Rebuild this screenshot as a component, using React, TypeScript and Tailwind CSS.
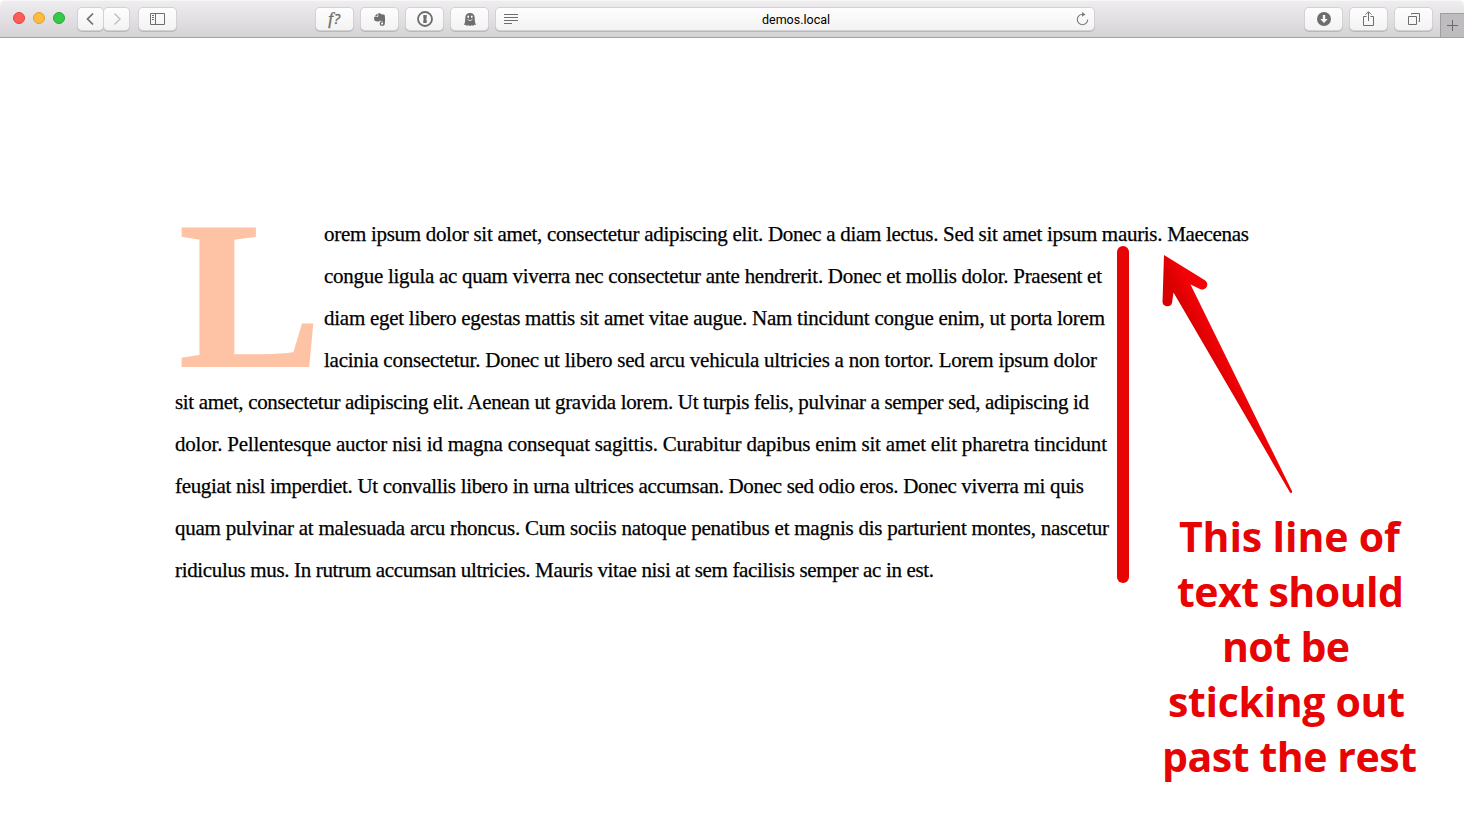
import { useLayoutEffect, useRef } from "react";
import type { ReactNode } from "react";

type Line = { text: string; width: number; shift?: string };

const besideCap: Line[] = [
  { text: "orem ipsum dolor sit amet, consectetur adipiscing elit. Donec a diam lectus. Sed sit amet ipsum mauris. Maecenas", width: 925 },
  { text: "congue ligula ac quam viverra nec consectetur ante hendrerit. Donec et mollis dolor. Praesent et", width: 778 },
  { text: "diam eget libero egestas mattis sit amet vitae augue. Nam tincidunt congue enim, ut porta lorem", width: 781 },
  { text: "lacinia consectetur. Donec ut libero sed arcu vehicula ultricies a non tortor. Lorem ipsum dolor", width: 773 },
];

const belowCap: Line[] = [
  { text: "sit amet, consectetur adipiscing elit. Aenean ut gravida lorem. Ut turpis felis, pulvinar a semper sed, adipiscing id", width: 914 },
  { text: "dolor. Pellentesque auctor nisi id magna consequat sagittis. Curabitur dapibus enim sit amet elit pharetra tincidunt", width: 932 },
  { text: "feugiat nisl imperdiet. Ut convallis libero in urna ultrices accumsan. Donec sed odio eros. Donec viverra mi quis", width: 909 },
  { text: "quam pulvinar at malesuada arcu rhoncus. Cum sociis natoque penatibus et magnis dis parturient montes, nascetur", width: 934 },
  { text: "ridiculus mus. In rutrum accumsan ultricies. Mauris vitae nisi at sem facilisis semper ac in est.", width: 759 },
];

const note: Line[] = [
  { text: "This line of", width: 221, shift: "pl-[26px]" },
  { text: "text should", width: 227, shift: "pl-[24px]" },
  { text: "not be", width: 128, shift: "pl-[69px]" },
  { text: "sticking out", width: 237, shift: "pl-[15px]" },
  { text: "past the rest", width: 255, shift: "pl-[9px]" },
];

/** One line of text, tracked so that it runs to the given measure. */
function FitLine({ text, width, shift = "" }: Line) {
  const ref = useRef<HTMLSpanElement>(null);
  useLayoutEffect(() => {
    const el = ref.current;
    if (!el) return;
    el.style.letterSpacing = "0px";
    const natural = el.getBoundingClientRect().width;
    el.style.letterSpacing = `${(width - natural) / (text.length - 1)}px`;
  }, [text, width]);
  return (
    <div className={`whitespace-nowrap ${shift}`}>
      <span ref={ref}>{text}</span>
    </div>
  );
}

function ToolButton({ children, className = "w-[38px]" }: { children?: ReactNode; className?: string }) {
  return (
    <div
      className={`flex h-[22px] shrink-0 items-center justify-center rounded-[4px] bg-linear-to-b from-[#fefefe] to-[#f3f3f3] text-[#6e6e6e] shadow-[0_0_0_1px_#d3d1d3,0_1px_0_1px_#b9b7b9] ${className}`}
    >
      {children}
    </div>
  );
}

function Toolbar() {
  return (
    <header className="flex h-[38px] items-start rounded-t-[5px] border-b border-[#a3a1a3] bg-linear-to-b from-[#efedef] to-[#d5d3d5] pt-2 shadow-[inset_0_1px_0_#f8f7f8]">
      <div className="ml-[13px] mt-1 flex gap-2">
        <i className="size-3 rounded-full border border-[#e2443f] bg-[#fc5b57]" />
        <i className="size-3 rounded-full border border-[#e0a033] bg-[#fdbc40]" />
        <i className="size-3 rounded-full border border-[#27a833] bg-[#35c94a]" />
      </div>
      <ToolButton className="ml-[13px] w-[25px] pr-[2px]">
        <svg width="10" height="14" viewBox="0 0 10 14" fill="none" stroke="#6e6e6e" strokeWidth="1.7"><path d="M8 1.500 2.500 7 8 12.500" /></svg>
      </ToolButton>
      <ToolButton className="ml-px w-[25px]">
        <svg width="10" height="14" viewBox="0 0 10 14" fill="none" stroke="#c2c2c2" strokeWidth="1.5"><path d="M2.5 1.5 8 7l-5.5 5.5" /></svg>
      </ToolButton>
      <ToolButton className="ml-[10px] w-[37px]">
        <svg width="15" height="12" viewBox="0 0 15 12" fill="none" stroke="#6e6e6e"><path d="M.5.5h14v11H.5zM5.5.5v11M2 2.5h2M2 4.5h2M2 6.5h2" /></svg>
      </ToolButton>
      <ToolButton className="ml-[140px] w-[37px]">
        <span className="pb-[2px] font-['Liberation_Serif',serif] text-[17px] italic leading-none tracking-[1px] [-webkit-text-stroke:0.4px_#6e6e6e]">f<span className="font-['Open_Sans',sans-serif] text-[14px]">?</span></span>
      </ToolButton>
      <ToolButton className="ml-2 w-[37px]">
        <svg width="12" height="13" viewBox="0 0 12 13" fill="currentColor"><path d="M3.6.3v2.3c0 .6-.3.8-.9.8H.5L3.6.3Z" /><path d="M4.3.2h1.5c.7 0 1.100.5 1.300 1l2.600.4c.9.1 1.100.8 1.200 2 .3 3 .2 5.700-.2 7.700-.2 1-1 1.500-2 1.500H7.500C6.300 12.800 5.800 12 5.800 11V10c0-1 .7-1.700 1.700-1.700h.9v1.500h-.8c-.4 0-.5.2-.5.5v.7c0 .4.2.6.6.6h.7c.5 0 .7-.3.7-.8 0-1.700-.3-2.500-1.300-2.700l-1.200-.2-.5-.8c-.1.900-.5 1.300-1.300 1.300-1.700 0-3.500-.2-4-.7C.1 7 0 5.400.2 4h2.900c.8 0 1.200-.4 1.200-1.200V.2Z" /></svg>
      </ToolButton>
      <ToolButton className="ml-2 w-[37px]">
        <svg width="16" height="16" viewBox="0 0 16 16"><circle cx="8" cy="8" r="7" fill="none" stroke="currentColor" strokeWidth="1.8" /><path d="M6.300 4h3.400v3.300l-.7.8.7.8V12H6.300V8.700L7 8l-.7-.7Z" fill="currentColor" /></svg>
      </ToolButton>
      <ToolButton className="ml-2 w-[37px]">
        <svg width="12" height="13" viewBox="0 0 12 13"><path d="M6 0c3 0 4.700 1.800 4.700 4.700 0 3 .3 5 1.300 7.300l-1.700-.2-.8 1-1.800-.6L6 13l-1.700-.8-1.800.6-.8-1L0 12c1-2.300 1.300-4.300 1.300-7.300C1.300 1.800 3 0 6 0Z" fill="currentColor" /><ellipse cx="4.200" cy="3.800" rx=".9" ry="1.200" fill="#f8f8f8" /><ellipse cx="7.800" cy="3.800" rx=".9" ry="1.200" fill="#f8f8f8" /><path d="M3.500 6.500Q6 8.800 8.500 6.500" fill="none" stroke="#f8f8f8" strokeWidth=".8" /></svg>
      </ToolButton>
      <ToolButton className="ml-2 w-[598px]">
        <div className="flex w-full items-center pl-2 pr-[5px]">
          <svg width="14" height="11" viewBox="0 0 14 11" stroke="#6e6e6e"><path d="M0 .5h14M0 3.500h14M0 6.500h14M0 9.500h8" /></svg>
          <span className="flex-1 pr-[2px] pt-[2px] text-center font-['Roboto',sans-serif] text-[12.5px] leading-[20px] text-black">demos.local</span>
          <svg width="13" height="14" viewBox="0 0 13 14" fill="none" stroke="#7c7c7c" strokeWidth="1.1"><path d="M6.500 2.300A5.200 5.200 0 1 0 11.700 7.500" /><path d="M6 0v4.800L9.500 2.400Z" fill="#7c7c7c" stroke="none" /></svg>
        </div>
      </ToolButton>
      <ToolButton className="ml-[211px] w-[37px]">
        <svg width="14" height="14" viewBox="0 0 14 14"><circle cx="7" cy="7" r="7" fill="currentColor" /><path d="M5.800 3h2.400v4h2.500L7 11 3.300 7h2.500Z" fill="#fafafa" /></svg>
      </ToolButton>
      <ToolButton className="ml-2 w-[37px]">
        <svg className="-mt-[2px]" width="11" height="15" viewBox="0 0 11 15" fill="none" stroke="currentColor"><path d="M3.500 5.500h-3v9h10v-9h-3M5.500 10V1M2.500 3.700l3-3 3 3" /></svg>
      </ToolButton>
      <ToolButton className="ml-2 w-[37px]">
        <svg width="12" height="12" viewBox="0 0 12 12" fill="none" stroke="currentColor"><path d="M.5 3.500h8v8h-8zM3.500 1.500v-1h8v8h-1" /></svg>
      </ToolButton>
      <div className="ml-[8px] mt-[5px] flex h-[24px] flex-1 items-center justify-center border-l border-t border-[#9f9d9f] bg-[#bebcbe]">
        <svg width="11" height="11" viewBox="0 0 11 11" stroke="#6a6a6a"><path d="M5.500 0v11M0 5.500h11" /></svg>
      </div>
    </header>
  );
}

export default function App() {
  return (
    <div className="relative h-[836px] w-[1464px] overflow-hidden rounded-[5px] bg-white">
      <Toolbar />
      <main className="pl-[175px] pt-[175px] font-['Liberation_Serif',serif] text-[21px] leading-[42px] text-black [-webkit-text-stroke:0.25px_#000]">
        <div className="flex">
          <span className="h-[168px] w-[149px] shrink-0 origin-left scale-x-[1.015] pl-[4px] text-[210px] font-bold leading-[165px] text-[#fec3a4] [-webkit-text-stroke:2px_#fec3a4]">L</span>
          <div>{besideCap.map((line) => <FitLine key={line.text} {...line} />)}</div>
        </div>
        {belowCap.map((line) => <FitLine key={line.text} {...line} />)}
      </main>
      <svg className="absolute left-[1110px] top-[240px]" width="200" height="350" viewBox="1110 240 200 350">
        <defs>
          <linearGradient id="arrow" gradientUnits="userSpaceOnUse" x1="1217" y1="378" x2="1233" y2="370">
            <stop offset="0" stopColor="#d80000" />
            <stop offset="1" stopColor="#f20307" />
          </linearGradient>
        </defs>
        <path d="M1123 252V577" stroke="#e60404" strokeWidth="12" strokeLinecap="round" />
        <path d="M1164 255 1204.500 280A5 5 0 0 1 1200 289L1190.500 284.500 1292.200 491.500Q1292 494 1290 492.500L1173.500 292.500 1172 303A4.900 4.900 0 0 1 1162.500 302Z" fill="url(#arrow)" />
      </svg>
      <aside className="absolute left-[1153px] top-[509px] w-[280px] font-['Open_Sans',sans-serif] text-[41px] font-bold leading-[55px] text-[#e60404]">
        {note.map((line) => <FitLine key={line.text} {...line} />)}
      </aside>
    </div>
  );
}
